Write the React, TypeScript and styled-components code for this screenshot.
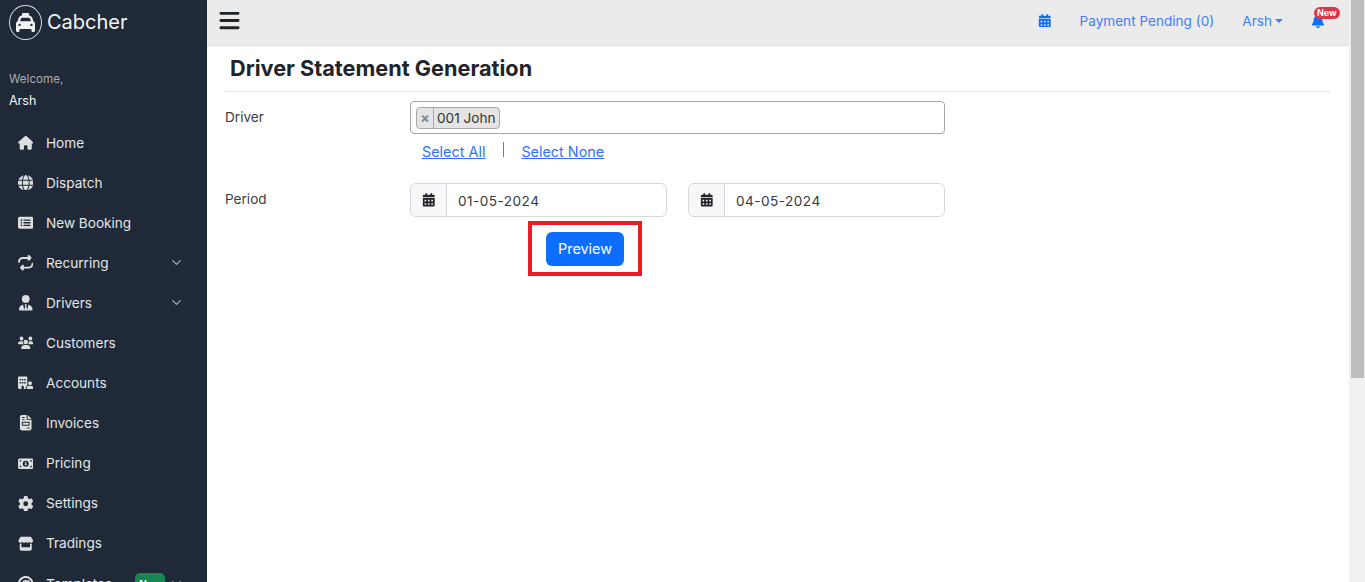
import React from "react";
import styled, { createGlobalStyle } from "styled-components";
import { ChevronDown } from "lucide-react";
import {
  FaAt,
  FaBars,
  FaBell,
  FaBuildingUser,
  FaCalendarDays,
  FaFileInvoice,
  FaGear,
  FaGlobe,
  FaHouse,
  FaMoneyBill1,
  FaRectangleList,
  FaRepeat,
  FaStore,
  FaTaxi,
  FaUserTie,
  FaUsers,
} from "react-icons/fa6";

const menu = [
  { label: "Home", icon: <FaHouse /> },
  { label: "Dispatch", icon: <FaGlobe /> },
  { label: "New Booking", icon: <FaRectangleList /> },
  { label: "Recurring", icon: <FaRepeat />, arrow: true },
  { label: "Drivers", icon: <FaUserTie />, arrow: true },
  { label: "Customers", icon: <FaUsers /> },
  { label: "Accounts", icon: <FaBuildingUser /> },
  { label: "Invoices", icon: <FaFileInvoice /> },
  { label: "Pricing", icon: <FaMoneyBill1 /> },
  { label: "Settings", icon: <FaGear /> },
  { label: "Tradings", icon: <FaStore /> },
  { label: "Templates", icon: <FaAt />, arrow: true, isNew: true },
];

export default function App() {
  return (
    <Page>
      <GlobalStyle />
      <Sidebar>
        <Brand>
          <LogoCircle>
            <FaTaxi size={19} />
          </LogoCircle>
          <BrandName>Cabcher</BrandName>
        </Brand>
        <Welcome>Welcome,</Welcome>
        <UserName>Arsh</UserName>
        <Menu>
          {menu.map((item) => (
            <MenuItem key={item.label}>
              <MenuIcon>{item.icon}</MenuIcon>
              <MenuLabel>{item.label}</MenuLabel>
              {item.isNew && <GreenBadge>New</GreenBadge>}
              {item.arrow && (
                <MenuArrow>
                  <ChevronDown size={15} strokeWidth={1.8} />
                </MenuArrow>
              )}
            </MenuItem>
          ))}
        </Menu>
      </Sidebar>
      <Main>
        <TopBar>
          <BarsButton>
            <FaBars size={23} />
          </BarsButton>
          <TopLinks>
            <FaCalendarDays size={13.5} />
            <PendingLink>Payment Pending (0)</PendingLink>
            <UserMenu>
              Arsh
              <Caret />
            </UserMenu>
            <BellWrap>
              <FaBell size={14} />
              <RedBadge>New</RedBadge>
            </BellWrap>
          </TopLinks>
        </TopBar>
        <Content>
          <Title>Driver Statement Generation</Title>
          <FormRow>
            <FieldLabel>Driver</FieldLabel>
            <FieldColumn>
              <MultiSelect>
                <Chip>
                  <ChipRemove>×</ChipRemove>
                  <ChipText>001 John</ChipText>
                </Chip>
              </MultiSelect>
              <SelectLinks>
                <SelectLink>Select All</SelectLink>
                <Divider />
                <SelectLink>Select None</SelectLink>
              </SelectLinks>
            </FieldColumn>
          </FormRow>
          <PeriodRow>
            <FieldLabel>Period</FieldLabel>
            <DateFields>
              <DateGroup>
                <DateAddon>
                  <FaCalendarDays size={13.5} />
                </DateAddon>
                <DateValue>01-05-2024</DateValue>
              </DateGroup>
              <DateGroup>
                <DateAddon>
                  <FaCalendarDays size={13.5} />
                </DateAddon>
                <DateValue>04-05-2024</DateValue>
              </DateGroup>
            </DateFields>
          </PeriodRow>
          <PreviewRow>
            <Highlight>
              <PreviewButton>Preview</PreviewButton>
            </Highlight>
          </PreviewRow>
        </Content>
      </Main>
      <ScrollTrack>
        <ScrollThumb />
      </ScrollTrack>
    </Page>
  );
}

// --- Styles ---

const GlobalStyle = createGlobalStyle`
  body {
    margin: 0;
    font-family: Inter, "Liberation Sans", sans-serif;
    font-size: 13.6px;
    color: #212529;
    background: #fff;
  }
  * {
    box-sizing: border-box;
  }
`;

const Page = styled.div`
  display: flex;
  height: 100vh;
  overflow: hidden;
`;

const Sidebar = styled.aside`
  flex: 0 0 207px;
  overflow: hidden;
  background: #1f2937;
  color: #fff;
`;

const Brand = styled.div`
  display: flex;
  align-items: center;
  gap: 5px;
  height: 45px;
  padding-left: 9px;
`;

const LogoCircle = styled.div`
  display: flex;
  align-items: center;
  justify-content: center;
  width: 33px;
  height: 35px;
  border: 1px solid #d8dade;
  border-radius: 50%;
  color: #f2f3f4;
`;

const BrandName = styled.div`
  font-size: 20px;
  line-height: 24px;
  margin-top: -2px;
  color: #f4f5f6;
`;

const Welcome = styled.div`
  margin-top: 25px;
  padding-left: 9px;
  font-size: 11.6px;
  line-height: 18px;
  color: #a9adb3;
`;

const UserName = styled.div`
  margin-top: 4px;
  padding-left: 9px;
  font-size: 12.5px;
  line-height: 18px;
  color: #f4f5f6;
`;

const Menu = styled.nav`
  display: flex;
  flex-direction: column;
  margin-top: 12.5px;
`;

const MenuItem = styled.div`
  display: flex;
  align-items: center;
  flex: 0 0 40.1px;
  padding-left: 16.5px;
  color: #e4e6e8;
`;

const MenuIcon = styled.span`
  display: flex;
  justify-content: center;
  width: 18px;
  margin-right: 11.5px;
  font-size: 15.5px;
  color: #dcdee0;
`;

const MenuLabel = styled.span`
  font-size: 13.6px;
  line-height: 20px;
`;

const MenuArrow = styled.span`
  display: flex;
  margin-left: auto;
  margin-right: 23px;
  color: #aeb2b8;
`;

const GreenBadge = styled.span`
  margin-left: 23px;
  margin-right: -10px;
  padding: 5px 4px;
  border-radius: 5px;
  background: #198754;
  color: #fff;
  font-size: 10px;
  line-height: 12px;
  font-weight: 700;
`;

const Main = styled.main`
  flex: 1;
  min-width: 0;
`;

const TopBar = styled.header`
  display: flex;
  align-items: center;
  justify-content: space-between;
  height: 46px;
  padding: 0 24px 4px 11px;
  background: #ebebeb;
  border-bottom: 1px solid #dedede;
`;

const BarsButton = styled.div`
  display: flex;
  color: #212529;
`;

const TopLinks = styled.div`
  display: flex;
  align-items: center;
  color: #0d6efd;
`;

const PendingLink = styled.span`
  margin-left: 28px;
  font-size: 13.6px;
  color: #3d7ff5;
`;

const UserMenu = styled.span`
  display: flex;
  align-items: center;
  margin-left: 28px;
  font-size: 13.6px;
  color: #3d7ff5;
`;

const Caret = styled.span`
  width: 0;
  height: 0;
  margin-left: 3px;
  border-top: 4px solid #3d7ff5;
  border-left: 4px solid transparent;
  border-right: 4px solid transparent;
`;

const BellWrap = styled.span`
  position: relative;
  display: flex;
  margin-left: 28px;
  color: #0d6efd;
`;

const RedBadge = styled.span`
  position: absolute;
  top: -7px;
  left: 3px;
  padding: 1px 3px;
  border-radius: 6px;
  background: #dc3545;
  color: #fff;
  font-size: 9px;
  line-height: 10px;
  font-weight: 700;
`;

const Content = styled.div`
  padding: 0 18px;
`;

const Title = styled.h1`
  margin: 0;
  padding: 7px 0 6px 5px;
  height: 46px;
  border-bottom: 1px solid #e6e6e6;
  font-size: 21.7px;
  line-height: 30px;
  font-weight: 700;
  color: #212529;
`;

const FormRow = styled.div`
  display: flex;
  align-items: flex-start;
  margin-top: 9px;
`;

const PeriodRow = styled(FormRow)`
  margin-top: 21px;
`;

const FieldLabel = styled.label`
  flex: 0 0 185px;
  padding-top: 7px;
  font-size: 13.6px;
  line-height: 18px;
  color: #3b4046;
`;

const FieldColumn = styled.div`
  width: 535px;
`;

const MultiSelect = styled.div`
  display: flex;
  align-items: center;
  height: 33px;
  padding-left: 5px;
  border: 1px solid #a6a6a6;
  border-radius: 4px;
`;

const Chip = styled.div`
  display: flex;
  align-items: stretch;
  height: 22px;
  border: 1px solid #aaa;
  border-radius: 4px;
  background: #e4e4e4;
`;

const ChipRemove = styled.span`
  display: flex;
  align-items: center;
  justify-content: center;
  width: 17px;
  border-right: 1px solid #aaa;
  color: #888;
  font-size: 14px;
  font-weight: 700;
`;

const ChipText = styled.span`
  padding: 0 0 0 3px;
  width: 65px;
  font-size: 13.6px;
  line-height: 20px;
  color: #333;
`;

const SelectLinks = styled.div`
  display: flex;
  align-items: flex-start;
  margin-top: 8px;
  margin-bottom: 1px;
  padding-left: 12px;
`;

const SelectLink = styled.a`
  font-size: 14.4px;
  line-height: 19px;
  color: #2f73f2;
  text-decoration: underline;
`;

const Divider = styled.span`
  width: 1px;
  height: 15px;
  margin: 0 17px 0 18px;
  background: #a5772a;
`;

const DateFields = styled.div`
  display: flex;
  gap: 21px;
  width: 535px;
`;

const DateGroup = styled.div`
  display: flex;
  flex: 1;
  height: 34px;
  border: 1px solid #d5d7da;
  border-radius: 6px;
  overflow: hidden;
`;

const DateAddon = styled.div`
  display: flex;
  align-items: center;
  justify-content: center;
  flex: 0 0 36px;
  background: #f7f8f9;
  border-right: 1px solid #d5d7da;
  color: #212529;
`;

const DateValue = styled.div`
  display: flex;
  align-items: center;
  padding: 1px 0 0 11px;
  font-size: 13.6px;
  letter-spacing: 0.47px;
  color: #333a42;
`;

const PreviewRow = styled.div`
  display: flex;
  margin-top: 4px;
  padding-left: 303px;
`;

const Highlight = styled.div`
  display: flex;
  align-items: center;
  justify-content: center;
  width: 114px;
  height: 55px;
  padding-top: 1px;
  border: 4px solid #ed1c24;
`;

const PreviewButton = styled.button`
  width: 78px;
  height: 34px;
  padding: 0 0 2px;
  border: none;
  border-radius: 6px;
  background: #0d6efd;
  color: #fff;
  font-family: inherit;
  font-size: 14.4px;
`;

const ScrollTrack = styled.div`
  flex: 0 0 16px;
  padding: 0 1px 0 2px;
  background: #f0f0f0;
`;

const ScrollThumb = styled.div`
  height: 378px;
  background: #bdbdbd;
`;
